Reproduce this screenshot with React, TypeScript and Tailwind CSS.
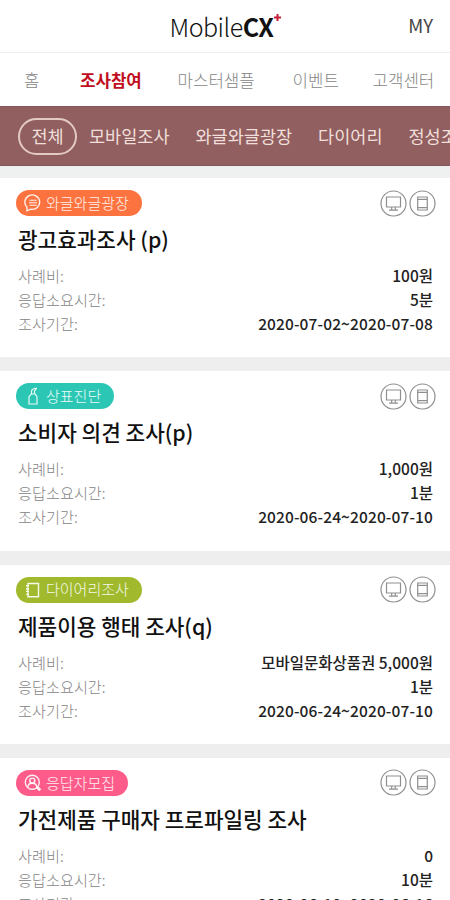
import React from "react";

type Kind = "talk" | "brand" | "diary" | "recruit";

interface Survey {
  kind: Kind;
  tag: string;
  color: string;
  width: string;
  title: string;
  fee: string;
  time: string;
  period: string;
}

const surveys: Survey[] = [
  { kind: "talk", tag: "와글와글광장", color: "bg-[#fd7340]", width: "w-[126px]", title: "광고효과조사 (p)", fee: "100원", time: "5분", period: "2020-07-02~2020-07-08" },
  { kind: "brand", tag: "상표진단", color: "bg-[#2bc7b4]", width: "w-[98px]", title: "소비자 의견 조사(p)", fee: "1,000원", time: "1분", period: "2020-06-24~2020-07-10" },
  { kind: "diary", tag: "다이어리조사", color: "bg-[#a1b92c]", width: "w-[126px]", title: "제품이용 행태 조사(q)", fee: "모바일문화상품권 5,000원", time: "1분", period: "2020-06-24~2020-07-10" },
  { kind: "recruit", tag: "응답자모집", color: "bg-[#fd5b89]", width: "w-[112px]", title: "가전제품 구매자 프로파일링 조사", fee: "0", time: "10분", period: "2020-06-10~2020-06-16" },
];

function TagIcon({ kind }: { kind: Kind }) {
  return (
    <svg className="h-[18px] w-[18px] shrink-0" viewBox="0 0 18 18" fill="none" stroke="#fff" strokeOpacity=".9" strokeWidth="1.4">
      {kind === "talk" && (
        <>
          <path d="M3 16.8V13.2A7.4 7.2 0 1 1 6.8 15.2Z" />
          <path d="M5.5 6.2h7.2M5 8.7h8.2M5.5 11.2h7.2" strokeWidth="1.1" />
        </>
      )}
      {kind === "brand" && (
        <path d="M5 17V9.7L7.3 7h3.8L13 9.7V17ZM7.5 6.8V4Q8 1.800 12.800 1.200M10.500 6.800V3.800L12.800 1.200" strokeWidth="1.2" />
      )}
      {kind === "diary" && <path d="M4 2.500h10.500v13.200H4ZM2 4.800h3M2 8h3M2 10.400h3M2 13.400h3" />}
      {kind === "recruit" && (
        <>
          <circle cx="8.3" cy="8.3" r="7" />
          <circle cx="8.3" cy="6.6" r="2.5" />
          <path d="M3.8 13c.5-5 8.500-5 9 0" />
          <path d="m13 13 3.200 3.200" strokeWidth="3" />
        </>
      )}
    </svg>
  );
}

function DeviceIcons() {
  return (
    <div className="flex gap-[2px]">
      <svg className="h-[27px] w-[27px]" viewBox="0 0 27 27" fill="none" stroke="#8f8f8f" strokeWidth="1.2">
        <circle cx="13.5" cy="13.5" r="12.5" />
        <path d="M6.5 7h14v10h-14ZM11.700 17v2.800M15.300 17v2.800M9 20.200h9" />
      </svg>
      <svg className="h-[27px] w-[27px]" viewBox="0 0 27 27" fill="none" stroke="#8f8f8f" strokeWidth="1.2">
        <circle cx="13.5" cy="13.5" r="12.5" />
        <path d="M8.700 7h9.600v13H8.700ZM8.700 9.300h9.600M8.700 17.700h9.600" />
      </svg>
    </div>
  );
}

function Row({ label, value, tracking = "" }: { label: string; value: string; tracking?: string }) {
  return (
    <div className="flex h-6 items-center justify-between leading-6">
      <span className="text-[15.2px] font-light text-[#848484]">{label}</span>
      <span className={`text-[15.5px] font-medium text-[#222] ${tracking}`}>{value}</span>
    </div>
  );
}

function Card({ s }: { s: Survey }) {
  return (
    <section className="h-[193.3px] shrink-0 border-b-[14px] border-[#eee] bg-white pt-[12px] pr-[17px] pl-[18px]">
      <div className="-mr-[3px] -ml-[2px] flex h-[26px] items-center justify-between">
        <div className={`flex h-[26px] items-center gap-[4px] rounded-full pl-[8px] text-[15px] font-light text-white/90 ${s.color} ${s.width}`}>
          <TagIcon kind={s.kind} />
          <span className="whitespace-nowrap">{s.tag}</span>
        </div>
        <DeviceIcons />
      </div>
      <h2 className="mt-[8px] mb-[9px] text-[21.3px] leading-[30px] font-medium whitespace-nowrap text-[#111]">{s.title}</h2>
      <Row label="사례비:" value={s.fee} />
      <Row label="응답소요시간:" value={s.time} />
      <Row label="조사기간:" value={s.period} tracking="tracking-[0.12px]" />
    </section>
  );
}

export default function App() {
  return (
    <div className="flex h-[900px] w-[450px] flex-col overflow-hidden bg-white font-['Noto_Sans_CJK_KR',sans-serif]">
      <header className="grid h-[53px] shrink-0 grid-cols-[1fr_auto_1fr] items-center border-b border-[#eee]">
        <span />
        <div className="flex items-center text-[25px] leading-none tracking-[-0.5px] text-[#111]">
          <span className="font-light">Mobile</span>
          <span className="font-bold">CX</span>
          <svg className="mb-[18px] h-[7px] w-[7px]" viewBox="0 0 7 7" stroke="#c41e3a" strokeWidth="2">
            <path d="M3.5 0v7M0 3.5h7" />
          </svg>
        </div>
        <span className="pr-[17px] text-right text-[18.5px] text-[#444]">MY</span>
      </header>
      <nav className="flex h-[53px] shrink-0 items-center pt-[3px] pl-[24px] text-[16.8px] font-light whitespace-nowrap text-[#858585]">
        <span className="w-[56px]">홈</span>
        <span className="w-[97.5px] font-bold text-[#c00d20]">조사참여</span>
        <span className="w-[115px]">마스터샘플</span>
        <span className="w-[80px]">이벤트</span>
        <span>고객센터</span>
      </nav>
      <div className="flex h-[60px] shrink-0 items-center gap-[26px] border-t border-b border-[#855656] bg-[#915f5f] pl-[18px] text-[17.5px] whitespace-nowrap text-[#f0dfdb]">
        <span className="-mr-[14px] flex h-[37px] w-[59px] shrink-0 items-center justify-center rounded-full border-2 border-[#e3cac2]">전체</span>
        <span className="shrink-0">모바일조사</span>
        <span className="shrink-0">와글와글광장</span>
        <span className="shrink-0">다이어리</span>
        <span className="shrink-0">정성조사</span>
      </div>
      <div className="h-[12px] shrink-0 bg-[#eff0f0]" />
      {surveys.map((s) => (
        <Card key={s.tag} s={s} />
      ))}
    </div>
  );
}
